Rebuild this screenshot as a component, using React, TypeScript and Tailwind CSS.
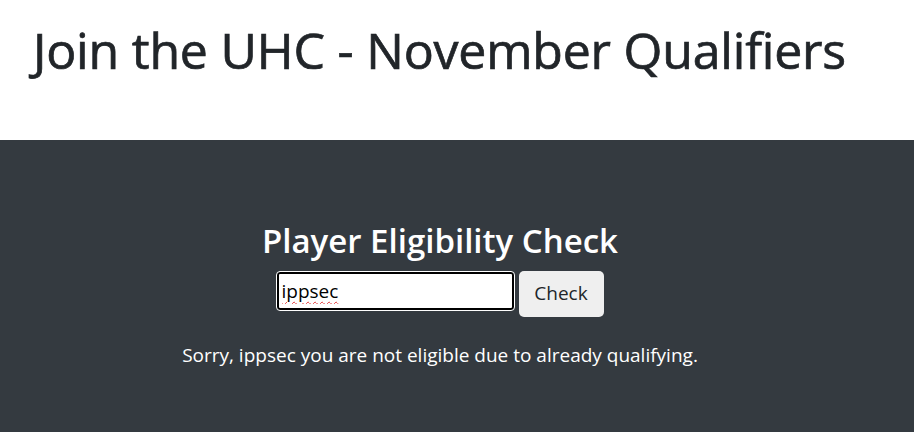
import React from "react";

export default function App() {
  return (
    <div className="min-h-screen bg-[#343a40]" style={{ fontFamily: '"Open Sans", "Noto Sans", sans-serif' }}>
      <div className="bg-white h-[140px] px-[33px] pt-[20px]">
        <h1 className="text-[50px] leading-[1.2] font-medium tracking-[-0.2px] text-[#212529] whitespace-nowrap [-webkit-text-stroke:0.7px_#212529]">Join the UHC - November Qualifiers</h1>
      </div>
      <div className="flex flex-col items-center pt-[81px] pr-[34px] text-white">
        <h2 className="text-[33px] leading-[1.2] font-semibold">Player Eligibility Check</h2>
        <div className="flex items-start gap-[5px] mt-[10px]">
          <input
            defaultValue="ippsec"
            className="w-[237px] h-[38px] mt-[1px] bg-white text-black border-2 border-black outline outline-1 outline-white rounded-[3px] px-[3px] text-[19px] leading-none underline decoration-wavy decoration-[#e03131] decoration-1 underline-offset-[3px]"
          />
          <button className="w-[85px] h-[46px] bg-[#efefef] text-[#212529] rounded-[5px] text-[19px]">Check</button>
        </div>
        <p className="mt-[24px] text-[19px] leading-[1.5]">Sorry, ippsec you are not eligible due to already qualifying.</p>
      </div>
    </div>
  );
}
